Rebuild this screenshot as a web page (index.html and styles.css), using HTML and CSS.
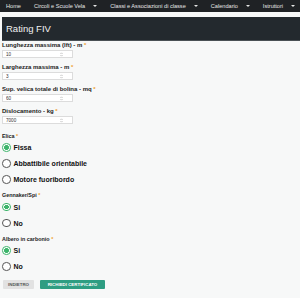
FILE: index.html
```html
<!DOCTYPE html>
<html lang="it">
<head>
<meta charset="utf-8">
<title>Rating FIV</title>
<link rel="stylesheet" href="styles.css">
</head>
<body>
<nav class="nav">
  <span class="nav-item">Home</span>
  <span class="nav-item">Circoli e Scuole Vela <span class="caret"></span></span>
  <span class="nav-item">Classi e Associazioni di classe <span class="caret"></span></span>
  <span class="nav-item">Calendario <span class="caret"></span></span>
  <span class="nav-item">Istruttori <span class="caret"></span></span>
</nav>
<main class="page">
  <h1 class="title">Rating FIV</h1>
  <form class="form">
    <div class="field">
      <label class="label">Lunghezza massima (lft) - m <span class="req">*</span></label>
      <div class="input-wrap"><input class="input" type="text" value="10"><svg class="spin" viewBox="0 0 4 6" width="3" height="5"><path d="M0.5 2.3 L2 0.8 L3.5 2.3 M0.5 3.7 L2 5.2 L3.5 3.7" fill="none" stroke="#999" stroke-width="0.7"/></svg></div>
    </div>
    <div class="field">
      <label class="label">Larghezza massima - m <span class="req">*</span></label>
      <div class="input-wrap"><input class="input" type="text" value="3"><svg class="spin" viewBox="0 0 4 6" width="3" height="5"><path d="M0.5 2.3 L2 0.8 L3.5 2.3 M0.5 3.7 L2 5.2 L3.5 3.7" fill="none" stroke="#999" stroke-width="0.7"/></svg></div>
    </div>
    <div class="field">
      <label class="label">Sup. velica totale di bolina - mq <span class="req">*</span></label>
      <div class="input-wrap"><input class="input" type="text" value="60"><svg class="spin" viewBox="0 0 4 6" width="3" height="5"><path d="M0.5 2.3 L2 0.8 L3.5 2.3 M0.5 3.7 L2 5.2 L3.5 3.7" fill="none" stroke="#999" stroke-width="0.7"/></svg></div>
    </div>
    <div class="field">
      <label class="label">Dislocamento - kg <span class="req">*</span></label>
      <div class="input-wrap"><input class="input" type="text" value="7000"><svg class="spin" viewBox="0 0 4 6" width="3" height="5"><path d="M0.5 2.3 L2 0.8 L3.5 2.3 M0.5 3.7 L2 5.2 L3.5 3.7" fill="none" stroke="#999" stroke-width="0.7"/></svg></div>
    </div>

    <div class="group">
      <div class="group-label">Elica <span class="req">*</span></div>
      <label class="option"><input class="radio" type="radio" name="elica" checked><span>Fissa</span></label>
      <label class="option"><input class="radio" type="radio" name="elica"><span>Abbattibile orientabile</span></label>
      <label class="option"><input class="radio" type="radio" name="elica"><span>Motore fuoribordo</span></label>
    </div>
    <div class="group">
      <div class="group-label">Gennaker/Spi <span class="req">*</span></div>
      <label class="option"><input class="radio" type="radio" name="spi" checked><span>Si</span></label>
      <label class="option"><input class="radio" type="radio" name="spi"><span>No</span></label>
    </div>
    <div class="group">
      <div class="group-label">Albero in carbonio <span class="req">*</span></div>
      <label class="option"><input class="radio" type="radio" name="albero" checked><span>Si</span></label>
      <label class="option"><input class="radio" type="radio" name="albero"><span>No</span></label>
    </div>

    <div class="actions">
      <button type="button" class="btn btn-back">Indietro</button>
      <button type="button" class="btn btn-primary">Richiedi certificato</button>
    </div>
  </form>
</main>
</body>
</html>
```

FILE: styles.css
```css
* { box-sizing: border-box; }
html, body { margin: 0; padding: 0; }
body {
  background: #f7f8f8;
  font-family: "Liberation Sans", Arial, sans-serif;
  color: #222;
  width: 300px;
  overflow: hidden;
}
.nav {
  height: 12px;
  background: #1f2225;
  display: flex;
  align-items: center;
  padding-left: 6px;
  gap: 13px;
  white-space: nowrap;
}
.nav-item {
  color: #e6e6e6;
  font-size: 5.6px;
  display: flex;
  align-items: center;
}
.caret {
  display: inline-block;
  margin-left: 8px;
  width: 0; height: 0;
  border-left: 2px solid transparent;
  border-right: 2px solid transparent;
  border-top: 2px solid #e6e6e6;
}
.page { padding-left: 2px; }
.title {
  margin: 5px 0 0 0;
  height: 24px;
  background: #23292e;
  border-bottom: 1px solid #4a5055;
  color: #f2f2f2;
  font-size: 9.5px;
  font-weight: normal;
  display: flex;
  align-items: center;
  padding-left: 4px;
}
.form { padding-top: 1px; }
.field { margin-bottom: 6px; }
.label {
  display: block;
  font-size: 6px;
  line-height: 7px;
  font-weight: bold;
  color: #222;
  margin-bottom: 1px;
}
.req { color: #f0a030; }
.input-wrap {
  position: relative;
  width: 71px;
  height: 8px;
}
.input {
  display: block;
  width: 71px;
  height: 8px;
  border: 1px solid #dcdcdc;
  background: #fff;
  font-family: inherit;
  font-size: 4.6px;
  color: #333;
  padding: 0 0 0 3px;
  margin: 0;
  outline: none;
}
.spin {
  position: absolute;
  left: 58px;
  top: 1.5px;
}
.group { margin-top: 8.5px; }
.group + .group { margin-top: 4.5px; }
.group-label {
  font-size: 5.4px;
  line-height: 7px;
  font-weight: bold;
  color: #222;
}
.option {
  display: flex;
  align-items: center;
  height: 16px;
  font-size: 7px;
  font-weight: bold;
  color: #111;
}
.radio {
  appearance: none;
  -webkit-appearance: none;
  margin: 0 3px 0 0;
  width: 8.5px;
  height: 8.5px;
  border-radius: 50%;
  border: 1px solid #555;
  background: #fff;
  position: relative;
}
.radio:checked {
  border: 1.3px solid #3db56b;
  background: radial-gradient(circle, #3db56b 0 2.2px, #fff 2.5px);
}
.actions {
  display: flex;
  gap: 6px;
  margin-top: 5px;
  padding-left: 1px;
}
.btn {
  border: none;
  height: 9px;
  padding: 0 4px;
  font-family: inherit;
  font-size: 4.4px;
  font-weight: bold;
  text-transform: uppercase;
  margin: 0;
  border-radius: 1px;
}
.btn-back { background: #e2e2e2; color: #555; width: 31px; }
.btn-primary { background: #2e9d82; color: #fff; width: 65px; }
```
